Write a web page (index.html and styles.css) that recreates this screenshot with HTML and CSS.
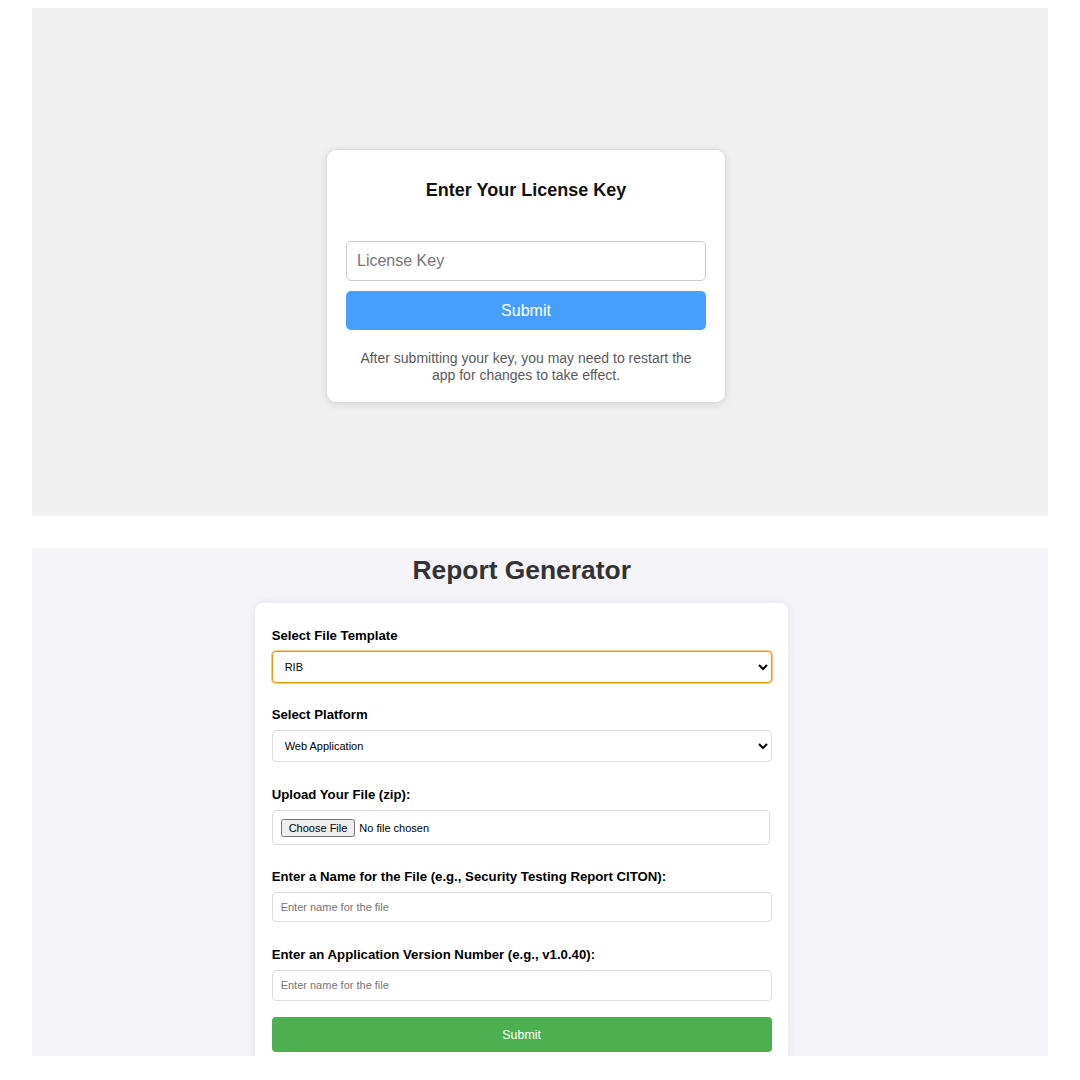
FILE: index.html
```html
<!DOCTYPE html>
<html lang="en">
<head>
<meta charset="utf-8">
<title>License &amp; Report Generator</title>
<link rel="stylesheet" href="styles.css">
</head>
<body>
<div class="page">
  <section class="panel panel-license">
    <div class="license-card">
      <h2 class="license-title">Enter Your License Key</h2>
      <input class="license-input" type="text" placeholder="License Key">
      <button class="license-btn" type="button">Submit</button>
      <p class="license-note">After submitting your key, you may need to restart the app for changes to take effect.</p>
    </div>
  </section>
  <section class="panel panel-report">
    <h1 class="report-title">Report Generator</h1>
    <form class="report-card">
      <div class="field">
        <label class="field-label">Select File Template</label>
        <select class="control control-select is-focused"><option>RIB</option></select>
      </div>
      <div class="field">
        <label class="field-label">Select Platform</label>
        <select class="control control-select"><option>Web Application</option></select>
      </div>
      <div class="field">
        <label class="field-label">Upload Your File (zip):</label>
        <input class="control control-file" type="file">
      </div>
      <div class="field">
        <label class="field-label">Enter a Name for the File (e.g., Security Testing Report CITON):</label>
        <input class="control control-text" type="text" placeholder="Enter name for the file">
      </div>
      <div class="field">
        <label class="field-label">Enter an Application Version Number (e.g., v1.0.40):</label>
        <input class="control control-text control-tall" type="text" placeholder="Enter name for the file">
      </div>
      <button class="report-btn" type="button">Submit</button>
    </form>
  </section>
</div>
</body>
</html>
```
FILE: styles.css
```css
html, body {
  margin: 0;
  padding: 0;
  background: #ffffff;
  font-family: "Liberation Sans", Arial, sans-serif;
}

.page {
  display: flex;
  flex-direction: column;
  gap: 32px;
  padding: 8px 32px 0;
}

.panel {
  height: 508px;
  box-sizing: border-box;
  overflow: hidden;
}

/* ---------- License panel ---------- */
.panel-license {
  background: #f0f0f0;
  display: flex;
  justify-content: center;
  align-items: flex-start;
  padding: 141px 28px 0 0;
}

.license-card {
  width: 400px;
  box-sizing: border-box;
  background: #ffffff;
  border: 1px solid #dcdcdc;
  border-radius: 10px;
  padding: 20px 19px 18px;
  box-shadow: 0 2px 8px rgba(0, 0, 0, 0.1);
  display: flex;
  flex-direction: column;
  text-align: center;
}

.license-title {
  margin: 10px 0 40px;
  font-size: 18px;
  line-height: 21px;
  font-weight: bold;
  color: #111;
}

.license-input {
  height: 40px;
  box-sizing: border-box;
  border: 1px solid #cccccc;
  border-radius: 5px;
  padding: 0 10px;
  font-family: inherit;
  font-size: 16px;
  color: #222;
  outline: none;
}

.license-input::placeholder {
  color: #757575;
}

.license-btn {
  margin-top: 10px;
  height: 39px;
  border: none;
  border-radius: 5px;
  background: #469ffd;
  color: #ffffff;
  font-family: inherit;
  font-size: 16px;
}

.license-note {
  margin: 20px 10px 0;
  font-size: 14px;
  line-height: 17px;
  color: #5a5a5a;
}

/* ---------- Report panel ---------- */
.panel-report {
  background: #f4f4f9;
  display: flex;
  flex-direction: column;
  align-items: center;
  padding: 0 36.7px 0 0;
}

.report-title {
  margin: 7px 0 18px;
  font-size: 26.4px;
  line-height: 30px;
  font-weight: bold;
  color: #333333;
}

.report-card {
  width: 500px;
  flex-shrink: 0;
  padding: 16.5px;
  background: #ffffff;
  border-radius: 8px;
  box-shadow: 0 0 10px rgba(0, 0, 0, 0.08);
}

.field {
  display: flex;
  flex-direction: column;
  align-items: flex-start;
  margin-bottom: 16.5px;
}

.field-label {
  display: block;
  margin: 8px 0;
  font-size: 13.2px;
  line-height: 15px;
  font-weight: bold;
  color: #000;
}

.control {
  display: block;
  width: 100%;
  box-sizing: border-box;
  margin: 0;
  border: 1px solid #dddddd;
  border-radius: 4px;
  background: #ffffff;
  font-family: inherit;
  font-size: 11px;
  color: #000;
  outline: none;
}

.control-select {
  height: 32px;
  padding: 0 8px;
}

.control-select.is-focused {
  border-color: #e69c10;
  box-shadow: 0 0 0 1px rgba(236, 165, 40, 0.6);
}

.control-file {
  width: 498px;
  height: 35px;
  padding: 8px;
}

.control-text {
  height: 30px;
  padding: 0 8px;
}

.control-tall {
  height: 31px;
}

.control-text::placeholder {
  color: #757575;
}

.report-btn {
  display: block;
  width: 100%;
  height: 35px;
  border: none;
  border-radius: 4px;
  background: #4caf50;
  color: #ffffff;
  font-family: inherit;
  font-size: 12.4px;
}
```
